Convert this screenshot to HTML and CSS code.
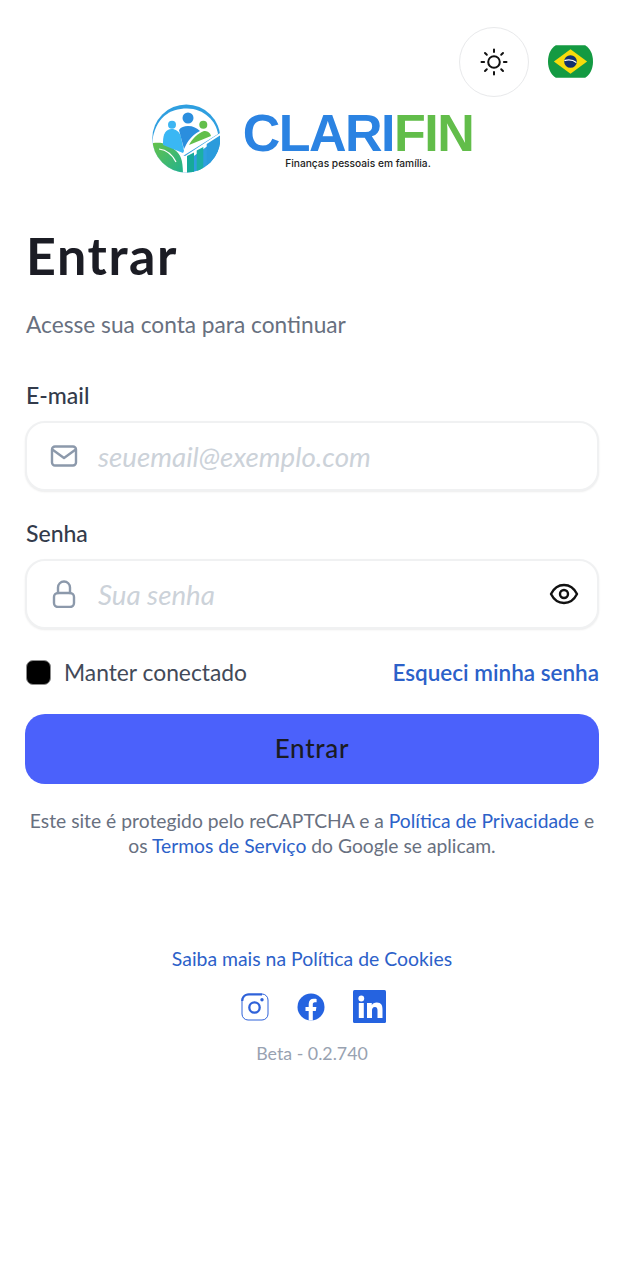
FILE: index.html
```html
<!DOCTYPE html>
<html lang="pt-BR">
<head>
<meta charset="utf-8">
<title>Entrar - Clarifin</title>
<link rel="stylesheet" href="styles.css">
</head>
<body>
<main class="page">
  <div class="topbar">
    <button class="theme-btn" aria-label="Tema">
      <svg width="28" height="28" viewBox="0 0 28 28" fill="none" stroke="#111" stroke-width="2" stroke-linecap="round"><circle cx="14" cy="14" r="5.800"/><path d="M14 1.500v2.600M14 23.900v2.600M1.500 14h2.600M23.900 14h2.600M5 5l1.800 1.800M21.200 21.200l1.800 1.800M5 23l1.800-1.800M21.200 6.800L23 5"/></svg>
    </button>
    <svg class="flag" width="45" height="33" viewBox="0 0 46 33"><path d="M8 0h30c5 3 8 9 8 16.500S43 30 38 33H8C3 30 0 24 0 16.500S3 3 8 0z" fill="#149a42"/><path d="M23 4l17 12.500L23 29 6 16.500z" fill="#f7dc0c"/><circle cx="23" cy="16.500" r="6.500" fill="#12306f"/><path d="M16.800 15.500c4-1 9-.5 12.200 2" stroke="#fff" stroke-width="1.300" fill="none"/></svg>
  </div>

  <div class="brand">
    <svg class="brand-mark" width="68" height="72" viewBox="0 0 68 72">
      <defs>
        <clipPath id="disc"><circle cx="34.300" cy="35.500" r="34"/></clipPath>
        <linearGradient id="leaf" x1="0" y1="0" x2="1" y2="1"><stop offset="0" stop-color="#66c24a"/><stop offset="1" stop-color="#1fb190"/></linearGradient>
      </defs>
      <g clip-path="url(#disc)">
        <rect width="68" height="72" fill="#2f9fe0"/>
        <path d="M0 40C3 14 18 5.500 35 5.500 52 5.500 64 18 66 31L31 53z" fill="#fff"/>
        <path d="M0 40L33 53 68 30V34L35 58v14H0z" fill="#fff"/>
        <path d="M1 40c10-1 16 1 22 7 6 5 8 10 8 25H0z" fill="url(#leaf)"/>
        <path d="M7 46c8 1 13 5 17 13" stroke="#fff" stroke-width="1.200" fill="none"/>
        <path d="M35 53l7-3.500V72h-7z" fill="#17a999"/>
        <path d="M44.700 47.500l6.600-3.500V72h-6.600z" fill="#1cafa4"/>
        <path d="M54.700 41L68 32.500V72H54.700z" fill="#2a9bdc"/>
      </g>
      <circle cx="20" cy="21.700" r="4" fill="#3db5f2"/>
      <circle cx="36" cy="15" r="5.500" fill="#2b8ede"/>
      <circle cx="51.300" cy="21.700" r="4" fill="#62bf4b"/>
      <path d="M11 39c0-8 3-13 8.500-13 4.500 0 7 2.500 9 6l3.500 16-1 2-20-8z" fill="#3ab7f4"/>
      <path d="M27 27c2-3 5-4 9-4 5 0 9 2 12 5-5 2-11 8-14 14l-2 4z" fill="#2b8ede"/>
      <path d="M37 42c3-6 9-12 15-14 3 0 6 1 7 5z" fill="#62bf4b"/>
    </svg>
    <div class="brand-text">
      <div class="brand-name">CLARI<span class="brand-fin">FIN</span></div>
      <div class="brand-tag">Finanças pessoais em família.</div>
    </div>
  </div>

  <h1 class="title">Entrar</h1>
  <p class="subtitle">Acesse sua conta para continuar</p>

  <form class="form">
    <label class="label">E-mail</label>
    <div class="field">
      <svg width="28" height="22" viewBox="0 0 28 22" fill="none" stroke="#8c99ab" stroke-width="2.400" stroke-linejoin="round" stroke-linecap="round"><rect x="2" y="1.500" width="24" height="19" rx="3"/><path d="M3 5l11 8 11-8"/></svg>
      <span class="placeholder">seuemail@exemplo.com</span>
    </div>
    <label class="label label-second">Senha</label>
    <div class="field">
      <svg width="28" height="28" viewBox="0 0 28 28" fill="none" stroke="#8c99ab" stroke-width="2.400" stroke-linecap="round"><rect x="4" y="13" width="20" height="14" rx="4"/><path d="M8 13V7.500a6 6 0 0 1 12 0V13"/></svg>
      <span class="placeholder">Sua senha</span>
      <svg class="eye" width="30" height="22" viewBox="0 0 30 22" fill="none" stroke="#111" stroke-width="2.400"><path d="M2 11C5 5 9.500 2 15 2s10 3 13 9c-3 6-7.500 9-13 9S5 17 2 11z" stroke-linejoin="round"/><circle cx="15" cy="11" r="4"/></svg>
    </div>
    <div class="options">
      <span class="remember"><span class="check"></span>Manter conectado</span>
      <a class="forgot">Esqueci minha senha</a>
    </div>
    <button class="submit" type="button">Entrar</button>
  </form>

  <p class="legal">Este site é protegido pelo reCAPTCHA e a <a class="link">Política de Privacidade</a> e os <a class="link">Termos de Serviço</a> do Google se aplicam.</p>

  <footer class="footer">
    <a class="cookies">Saiba mais na Política de Cookies</a>
    <div class="socials">
      <svg width="28" height="28" viewBox="0 0 28 28" fill="none" stroke="#2f62d9"><rect x="1" y="1" width="26" height="26" rx="6" stroke-width="1"/><path d="M1.200 8C1.500 3.500 4 1.500 8 1.500h13" stroke-width="2.200"/><circle cx="13.500" cy="14.500" r="5.200" stroke-width="2.300"/><circle cx="21" cy="6.800" r="1.700" fill="#2f62d9" stroke="none"/></svg>
      <svg width="28" height="28" viewBox="0 0 28 28"><circle cx="14" cy="14" r="13.500" fill="#2563e0"/><path d="M11.700 27.500V18H8.500v-4h3.200v-3c0-3.400 2-5.200 5-5.200 1.400 0 2.900.2 2.900.2v3.300h-1.700c-1.600 0-2.100 1-2.100 2V14h3.600l-.6 4h-3v9.500z" fill="#fff"/></svg>
      <svg width="33" height="33" viewBox="0 0 33 33"><rect width="33" height="33" rx="1.500" fill="#2563e0"/><circle cx="8.300" cy="8.500" r="2.900" fill="#fff"/><path d="M5.800 13h5v15h-5zM14 13h4.800v2.200c.8-1.400 2.500-2.600 5-2.600 4.600 0 5.700 3 5.700 7.200V28h-5v-7.200c0-1.900-.3-3.800-2.600-3.800s-2.900 1.800-2.900 3.700V28h-5z" fill="#fff"/></svg>
    </div>
    <span class="version">Beta - 0.2.740</span>
  </footer>
</main>
</body>
</html>
```
FILE: styles.css
```css
* { box-sizing: border-box; }
html, body { margin: 0; background: #fff; }
body { font-family: "Lato", "Noto Sans", sans-serif; color: #1a1b22; }
.page { width: 626px; height: 1280px; padding: 27px 27px 0 25px; overflow: hidden; }
.topbar { display: flex; justify-content: flex-end; align-items: center; gap: 19px; height: 70px; padding-right: 6px; }
.theme-btn { width: 70px; height: 70px; border-radius: 50%; border: 1.500px solid #e8e9eb; background: #fff; display: flex; align-items: center; justify-content: center; padding: 0; }
.flag { display: block; margin-top: -2px; }
.brand { display: flex; align-items: center; justify-content: center; gap: 24px; margin-top: 6px; height: 72px; }
.brand-mark { display: block; }
.brand-text { display: flex; flex-direction: column; align-items: center; width: 229px; }
.brand-name { font-family: "Liberation Sans", sans-serif; font-weight: 700; font-size: 52px; line-height: 48px; color: #2b83e2; white-space: nowrap; letter-spacing: -1.500px; }
.brand-fin { color: #62bd4a; }
.brand-tag { font-family: "Inter", sans-serif; font-size: 10.200px; line-height: 12px; font-weight: 500; color: #222; }
.title { font-size: 52px; line-height: 60px; font-weight: 700; letter-spacing: 1.600px; margin: 50px 0 0 1px; color: #1b1c24; }
.subtitle { font-size: 22.700px; line-height: 30px; margin: 25px 0 0 1px; color: #68707f; }
.form { display: flex; flex-direction: column; margin-top: 40px; }
.label { font-size: 23px; line-height: 30px; font-weight: 500; color: #333b4b; margin: 0 0 11px 1px; }
.label-second { margin-top: 27px; }
.field { height: 70px; border: 2px solid #f0f1f2; border-radius: 20px; box-shadow: 0 1px 2px rgba(0,0,0,.08); display: flex; align-items: center; gap: 20px; padding: 0 18px 0 23px; background: #fff; }
.placeholder { font-size: 27.700px; font-style: italic; color: #ccd2d9; }
.eye { margin-left: auto; }
.options { display: flex; justify-content: space-between; align-items: center; height: 30px; margin-top: 28px; padding-left: 1px; font-size: 22.800px; }
.remember { display: flex; align-items: center; gap: 13px; color: #424a59; }
.check { width: 25px; height: 25px; border-radius: 7px; background: #000; border: 1.500px solid #8c8c8c; }
.forgot { color: #2c61c9; font-weight: 600; font-size: 22.500px; }
.submit { height: 70px; margin-top: 27px; padding-bottom: 3px; border: 0; border-radius: 20px; background: #4b61fb; color: #1a1b22; font: 500 26px "Lato", sans-serif; letter-spacing: .7px; }
.legal { margin: 25px 0 0; text-align: center; font-size: 19.300px; line-height: 24.500px; color: #68707f; }
.link { color: #2c61c9; }
.footer { display: flex; flex-direction: column; align-items: center; margin-top: 89px; }
.cookies { color: #2c61c9; font-size: 19.400px; line-height: 24px; }
.socials { display: flex; align-items: center; gap: 28px; margin-top: 19px; height: 33px; padding-left: 3px; }
.version { color: #98a2b1; font-size: 17.800px; line-height: 24px; margin-top: 18px; }
```
